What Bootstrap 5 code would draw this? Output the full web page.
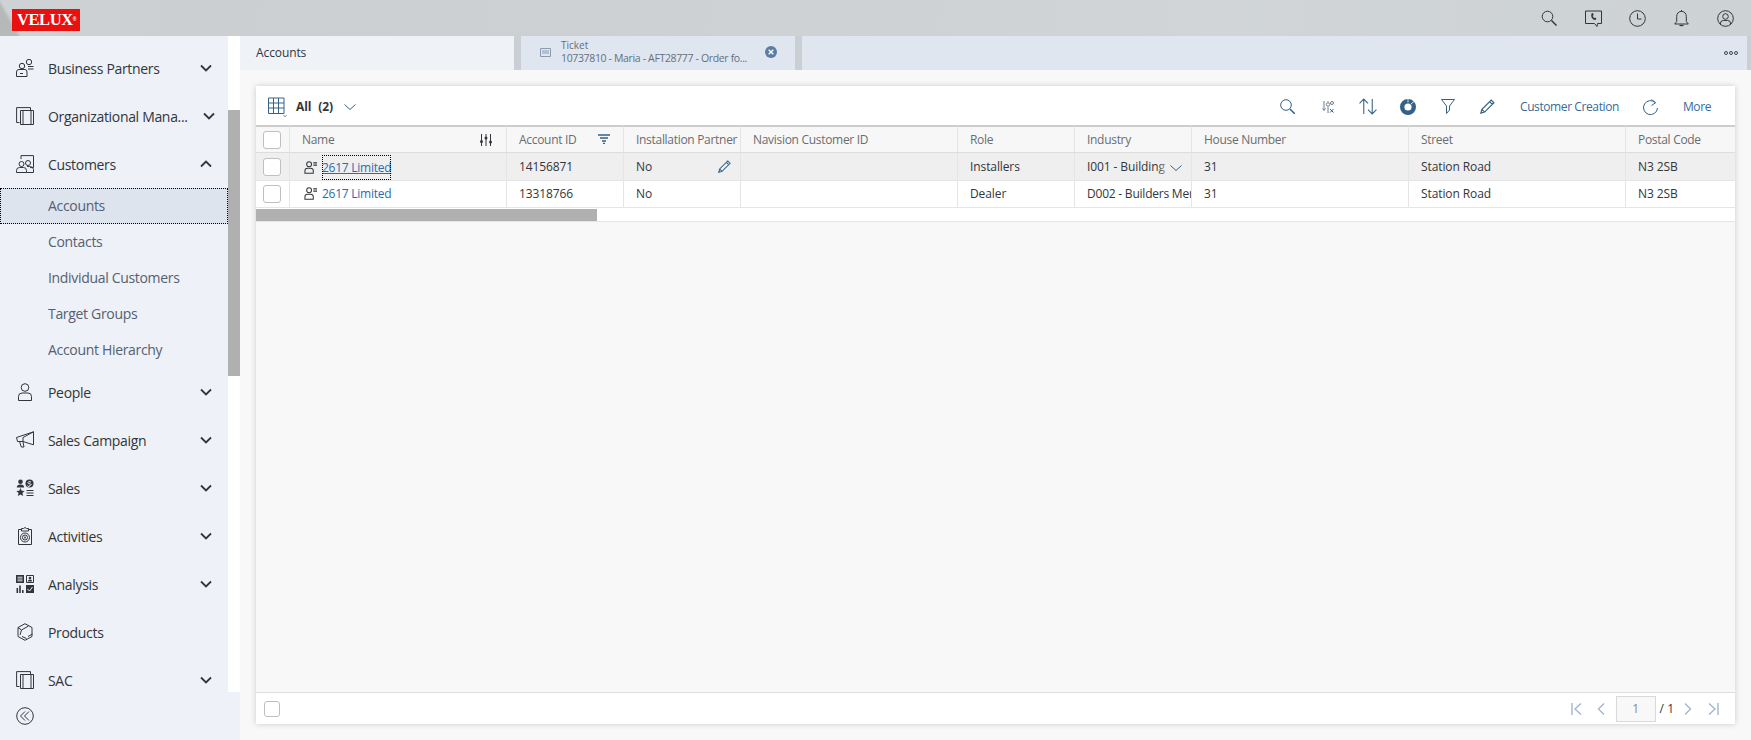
<!DOCTYPE html>
<html lang="en">
<head>
<meta charset="utf-8">
<title>Accounts</title>
<link href="https://cdn.jsdelivr.net/npm/bootstrap@5.3.0/dist/css/bootstrap.min.css" rel="stylesheet">
<style>
html,body{height:100%;overflow:hidden}
body{font-family:"Open Sans","Noto Sans",sans-serif;font-size:12px;color:#32363a;background:#f8f8f8}
.shell-top{height:36px;background:linear-gradient(60deg,#b5bab8 0,#b5bab8 15px,rgba(181,186,184,0) 19px),linear-gradient(100deg,#cfd3d6 0,#cbcfd2 10%,#cdd1d4 40%,#d1d5d7 70%,#cdd2d5 100%)}
.velux{width:68px;height:22px;margin:9px 0 0 12px;background:#e8110f;color:#fff;font:bold 16.5px/22px "Liberation Serif",serif;letter-spacing:-.4px;padding-left:5px;white-space:nowrap}
.velux sup{font-size:5px;top:-.8em;font-family:"Liberation Sans",sans-serif;letter-spacing:0}
.top-ico{width:44px;height:36px;color:#32363a}
.shell-body{height:704px}
.side{width:240px;background:#eef1f7;flex:none}
.side-scroll{height:656px}
.side-list{width:228px;padding-top:8px;height:656px;overflow:hidden;flex:none;font-size:14px;letter-spacing:-.32px}
.side-bar{width:12px;background:#fff;flex:none;height:656px}
.side-thumb{height:266px;margin-top:74px;background:#b0b0b0}
.nav-main{height:48px;padding-left:16px;color:#32363a}
.nav-main .nav-ico{width:18px;height:18px;margin-right:14px;flex:none;color:#32363a}
.nav-main span{flex:1;white-space:nowrap}
.nav-main .chev{width:12px;height:12px;margin-right:16px;flex:none}
.nav-main .chev.over{margin-right:13px}
.nav-sub{height:36px;padding-left:48px;padding-bottom:2px;color:#556070}
.nav-sub.on{background:#dde4ee;outline:1px dotted #000;outline-offset:-1px}
.side-foot{height:48px;padding-left:16px}
.main{min-width:0}
.tabs{height:34px;background:#c9cfd3;padding-right:4px;gap:7px}
.tab-a{width:274px;background:#eff3f8;padding-left:16px;flex:none;font-size:12px;letter-spacing:-.1px}
.tab-b{width:274px;background:#dfe6f0;flex:none;padding-left:19px;padding-bottom:2px;color:#6a7888}
.tab-ico{margin-right:10px;flex:none}
.tab-x{margin-right:18px;flex:none}
.tab-b small{display:block;font-size:10px;line-height:13px;color:#6a6d70}
.tab-b p{font-size:10.5px;line-height:13px;margin:0;white-space:nowrap;color:#64707e;letter-spacing:-.35px}
.tab-c{background:#dfe6f0;padding-right:9px}
.sheet{margin:16px;height:638px;background:#f8f8f8;box-shadow:0 0 6px rgba(0,0,0,.18)}
.tools{height:39px;background:#fff;color:#346187;padding:2px 12px 0 12px}
.tools b{color:#32363a;font-size:12px;font-weight:700;word-spacing:4px;letter-spacing:-.1px}
.thin-drop{margin-left:11px}
.tool-btn{width:40px;height:37px;flex:none}
.tool-txt{padding:0 12px;color:#3a6a99;font-size:12px;white-space:nowrap;letter-spacing:-.4px}
.grid-wrap{background:#fff;height:83px;overflow:hidden;flex:none}
table.grid{table-layout:fixed;border-collapse:separate;border-spacing:0;margin:0;width:1479px;color:#32363a}
table.grid th,table.grid td{font-weight:400;font-size:12px;padding:0 0 0 12px;border:0;border-right:1px solid #e5e5e5;border-bottom:1px solid #e5e5e5;white-space:nowrap;overflow:hidden;position:relative;vertical-align:middle;box-shadow:none;letter-spacing:-.1px}
table.grid th{height:28px;background:#f7f7f7;color:#6a6d70;border-top:2px solid #ccc;border-bottom-color:#ddd;letter-spacing:-.3px}
table.grid tr.hot td{height:28px;background:#efefef;padding-top:1px}
table.grid tr.cool td{height:27px;background:#fff}
table.grid .chk-cell{padding:0 0 0 7px}
table.grid td.tight-cell{letter-spacing:-.22px}
table.grid th:last-child,table.grid td:last-child{border-right:0}
.tick{display:block;width:18px;height:18px;border:1px solid #bfbfbf;border-radius:3px;background:#fff}
a.acct{color:#2b6cb0;text-decoration:none;letter-spacing:-.25px}
.focus-wrap{display:inline-block;padding:5px 0;line-height:15px;outline:1px dotted #000;outline-offset:-1px}
.person{width:13px;height:13px;margin:0 5px 0 2px;color:#32363a;vertical-align:-2px}
.head-ico{position:absolute;top:7px;color:#32363a}
.edit-ico{position:absolute;top:7px;right:9px;color:#346187}
.fade-tail{position:absolute;left:82px;top:0;width:16px;height:100%;background:linear-gradient(90deg,rgba(239,239,239,0),#efefef)}
.drop-ico{position:absolute;right:9px;top:9px;color:#346187}
.hscroll{height:14px;border-bottom:1px solid #e5e5e5;background:#fff;padding-top:1px}
.hthumb{width:341px;height:12px;background:#b0b0b0}
.sheet-foot{height:32px;background:#fff;border-top:1px solid #ddd;padding:0 16px 0 8px;color:#32363a}
.sheet-foot .tick{width:16px;height:16px}
.pager-ico{color:#a3b6cd;flex:none}
.pg-first{margin-right:14px}
.pg-of{margin-right:10px}
.pg-next{margin-right:15px}
.pager-num{width:40px;height:26px;border:1px solid #d9d9d9;background:#f8f8f8;color:#8a8a8a;text-align:center;line-height:24px;margin:0 4px 0 11px}
</style>
</head>
<body>
<svg width="0" height="0" class="position-absolute">
  <symbol id="down" viewBox="0 0 12 12"><path d="M1 3.500l5 5 5-5" fill="none" stroke="currentColor" stroke-width="1.800"/></symbol>
  <symbol id="up" viewBox="0 0 12 12"><path d="M1 8.500l5-5 5 5" fill="none" stroke="currentColor" stroke-width="1.800"/></symbol>
  <symbol id="thin" viewBox="0 0 12 12"><path d="M.5 3.500L6 8.500l5.500-5" fill="none" stroke="currentColor" stroke-width="1"/></symbol>
  <symbol id="pers" viewBox="0 0 14 14"><circle cx="5.500" cy="3.500" r="2.600" fill="none" stroke="currentColor" stroke-width="1.100"/><path d="M1 13.200V10.500q0-2.800 3-2.800h3q3 0 3 2.800v2.700z" fill="none" stroke="currentColor" stroke-width="1.100"/><path d="M10 2h4M10 4.500h4" stroke="currentColor" stroke-width="1.300"/></symbol>
  <symbol id="copies" viewBox="0 0 18 18"><path d="M3.500 15.500H.6V.6H14.500V3" fill="none" stroke="currentColor" stroke-width="1"/><path d="M4.500 3.500h13v14h-13z" fill="none" stroke="currentColor" stroke-width="1"/><path d="M7 3.500v14h8v-14" fill="none" stroke="currentColor" stroke-width="1"/></symbol>
  <symbol id="pen" viewBox="0 0 14 14"><path d="M.8 13.200l1-3.500L10.500 1l2.500 2.500-8.700 8.700zM9 2.500l2.500 2.500M1.800 9.700l2.500 2.500" fill="none" stroke="currentColor" stroke-width="1.100"/></symbol>
</svg>

<header class="shell-top d-flex justify-content-between">
  <div class="velux">VELUX<sup>®</sup></div>
  <div class="d-flex pe-1">
    <div class="top-ico d-flex align-items-center justify-content-center"><svg width="16" height="16" viewBox="0 0 16 16"><circle cx="6.500" cy="6.500" r="5.300" fill="none" stroke="currentColor"/><path d="M10.500 10.500l5 5" stroke="currentColor" stroke-width="1.500"/></svg></div>
    <div class="top-ico d-flex align-items-center justify-content-center"><svg width="17" height="17" viewBox="0 0 17 17"><path d="M.5 1h16v12.500h-4l-.5 3-2.500-3H.5z" fill="none" stroke="currentColor"/><path d="M6.500 3.500l1.500-.5.7 2-1 .8q.3 1.500 1.500 2.200l1-.6 1.300 1.600-1.200 1q-2.200 0-3.500-2.300-1-2-.3-4.200z" fill="currentColor"/></svg></div>
    <div class="top-ico d-flex align-items-center justify-content-center"><svg width="17" height="17" viewBox="0 0 17 17"><circle cx="8.500" cy="8.500" r="7.800" fill="none" stroke="currentColor"/><path d="M8.500 3.500v5.500h4" fill="none" stroke="currentColor"/></svg></div>
    <div class="top-ico d-flex align-items-center justify-content-center"><svg width="15" height="17" viewBox="0 0 15 17"><path d="M.7 14h13.600l-2-2.500V6.500q0-4.500-4.800-5.300Q2.700 2 2.700 6.500v5z" fill="none" stroke="currentColor"/><path d="M5.500 15.500h4" stroke="currentColor" stroke-width="1.300"/><path d="M7.500 0v1.500" stroke="currentColor"/></svg></div>
    <div class="top-ico d-flex align-items-center justify-content-center"><svg width="17" height="17" viewBox="0 0 17 17"><circle cx="8.500" cy="8.500" r="7.800" fill="none" stroke="currentColor"/><circle cx="8.500" cy="6.500" r="2.800" fill="none" stroke="currentColor"/><path d="M3.500 14.500v-1.500q0-2.500 3-2.500h4q3 0 3 2.500v1.500" fill="none" stroke="currentColor"/></svg></div>
  </div>
</header>

<div class="shell-body d-flex">
  <aside class="side d-flex flex-column">
    <div class="side-scroll d-flex">
      <nav class="side-list">
        <div class="nav-main d-flex align-items-center"><svg class="nav-ico" viewBox="0 0 18 18"><circle cx="13" cy="3" r="2.700" fill="none" stroke="currentColor"/><circle cx="6" cy="7" r="2.700" fill="none" stroke="currentColor"/><path d="M.5 17.500V13q0-2.500 2.500-2.500h6Q11 10.500 11 13v4.500zM12 7.500h5.500M12 10h5.500M4 14.500h3" fill="none" stroke="currentColor"/></svg><span>Business Partners</span><svg class="chev"><use href="#down"/></svg></div>
        <div class="nav-main d-flex align-items-center"><svg class="nav-ico" viewBox="0 0 18 18"><use href="#copies"/></svg><span>Organizational Mana...</span><svg class="chev over"><use href="#down"/></svg></div>
        <div class="nav-main d-flex align-items-center"><svg class="nav-ico" viewBox="0 0 18 18"><path d="M5 4V.6h12.500v12H14" fill="none" stroke="currentColor"/><circle cx="5.500" cy="9" r="2.500" fill="none" stroke="currentColor"/><circle cx="12" cy="8" r="2.500" fill="none" stroke="currentColor"/><path d="M.5 17.500v-2q0-3 3-3h4q3 0 3 3v2zM11 11.500h2.500q4 0 4 3v3h-7" fill="none" stroke="currentColor"/></svg><span>Customers</span><svg class="chev"><use href="#up"/></svg></div>
        <div class="nav-sub on d-flex align-items-center">Accounts</div>
        <div class="nav-sub d-flex align-items-center">Contacts</div>
        <div class="nav-sub d-flex align-items-center">Individual Customers</div>
        <div class="nav-sub d-flex align-items-center">Target Groups</div>
        <div class="nav-sub d-flex align-items-center">Account Hierarchy</div>
        <div class="nav-main d-flex align-items-center"><svg class="nav-ico" viewBox="0 0 18 18"><circle cx="9" cy="4.500" r="3.800" fill="none" stroke="currentColor"/><path d="M2.500 17.500v-4q0-3.500 3.500-3.500h6q3.500 0 3.500 3.500v4z" fill="none" stroke="currentColor"/></svg><span>People</span><svg class="chev"><use href="#down"/></svg></div>
        <div class="nav-main d-flex align-items-center"><svg class="nav-ico" viewBox="0 0 18 18"><path d="M17.500 .8v13L7 10.500H1.500L.5 6.500zM17.500 .8L7 6.500M7 6.500v4M3.500 10.500l1.800 5.500h2.700l-1-5" fill="none" stroke="currentColor" stroke-linejoin="round"/></svg><span>Sales Campaign</span><svg class="chev"><use href="#down"/></svg></div>
        <div class="nav-main d-flex align-items-center"><svg class="nav-ico" viewBox="0 0 18 18"><circle cx="4.500" cy="2.800" r="2.300" fill="currentColor"/><path d="M.8 8.500q0-3 3.700-3t3.700 3z" fill="currentColor"/><circle cx="13.500" cy="4.500" r="4" fill="currentColor"/><path d="M4.500 9l1.200 2.800 3 .2-2.300 2 .8 3-2.700-1.600L1.800 17l.8-3L.3 12l3-.2z" fill="currentColor"/><path d="M10.500 11.500h7M10.500 14h7M10.500 16.500h7" stroke="currentColor"/><path d="M15 3q-3-1-3 .5t2.200 1.500-.2 1.800-2.500-.3" stroke="#eef1f7" fill="none"/></svg><span>Sales</span><svg class="chev"><use href="#down"/></svg></div>
        <div class="nav-main d-flex align-items-center"><svg class="nav-ico" viewBox="0 0 18 18"><path d="M5 2.500H2.500v15h13v-15H13" fill="none" stroke="currentColor"/><path d="M5.500 1.500h2l1.500-1 1.500 1h2v2.500h-7z" fill="none" stroke="currentColor"/><circle cx="9" cy="10.500" r="4.500" fill="none" stroke="currentColor"/><circle cx="9" cy="10.500" r="2.500" fill="none" stroke="currentColor"/><circle cx="9" cy="10.500" r=".9" fill="currentColor"/></svg><span>Activities</span><svg class="chev"><use href="#down"/></svg></div>
        <div class="nav-main d-flex align-items-center"><svg class="nav-ico" viewBox="0 0 18 18"><path d="M0 0h8v8H0z" fill="currentColor"/><path d="M1.500 2.200h5M1.500 4h5M1.500 5.800h5" stroke="#eef1f7" stroke-width=".9"/><path d="M10.500 .5h7v7h-7z" fill="none" stroke="currentColor"/><circle cx="14" cy="3" r="1.300" fill="currentColor"/><path d="M11.800 6.500q0-2 2.200-2t2.200 2z" fill="currentColor"/><path d="M.5 13h1.600v5H.5zM3.200 10.500h1.600V18H3.200zM6 15h1.600v3H6z" fill="currentColor"/><path d="M10 10h8v8h-8z" fill="currentColor"/><path d="M11.500 14l2 2 3-4" stroke="#eef1f7" fill="none"/></svg><span>Analysis</span><svg class="chev"><use href="#down"/></svg></div>
        <div class="nav-main d-flex align-items-center"><svg class="nav-ico" viewBox="0 0 18 18"><path d="M9 .7l7 3.800v9l-7 3.800-7-3.800v-9z" fill="none" stroke="currentColor"/><path d="M2 4.500L5.500 7 4 12M5.500 7L12.500 3M6 13.500l4.500 2M12 13.500L16.500 11" fill="none" stroke="currentColor"/></svg><span>Products</span></div>
        <div class="nav-main d-flex align-items-center"><svg class="nav-ico" viewBox="0 0 18 18"><use href="#copies"/></svg><span>SAC</span><svg class="chev"><use href="#down"/></svg></div>
      </nav>
      <div class="side-bar"><div class="side-thumb"></div></div>
    </div>
    <div class="side-foot d-flex align-items-center"><svg width="18" height="18" viewBox="0 0 18 18"><circle cx="9" cy="9" r="8.300" fill="none" stroke="#32363a"/><path d="M9 4.500L4.500 9 9 13.500M13 4.500L8.500 9l4.500 4.500" fill="none" stroke="#32363a"/></svg></div>
  </aside>

  <main class="main flex-grow-1 d-flex flex-column">
    <div class="tabs d-flex">
      <div class="tab-a d-flex align-items-center">Accounts</div>
      <div class="tab-b d-flex align-items-center">
        <svg width="11" height="9" viewBox="0 0 11 9" class="tab-ico"><path d="M.5 .5h10v8H.5zM2 3h7M2 5h7" fill="none" stroke="#8a9bb0"/></svg>
        <div class="flex-grow-1"><small>Ticket</small><p>10737810 - Maria - AFT28777 - Order fo...</p></div>
        <svg width="12" height="12" viewBox="0 0 12 12" class="tab-x"><circle cx="6" cy="6" r="6" fill="#5b7ca6"/><path d="M3.700 3.700l4.600 4.600M8.300 3.700L3.700 8.300" stroke="#fff" stroke-width="1.400"/></svg>
      </div>
      <div class="tab-c flex-grow-1 d-flex align-items-center justify-content-end"><svg width="14" height="4" viewBox="0 0 14 4"><g fill="none" stroke="#32363a" stroke-width=".9"><circle cx="2" cy="2" r="1.500"/><circle cx="7" cy="2" r="1.500"/><circle cx="12" cy="2" r="1.500"/></g></svg></div>
    </div>

    <section class="sheet d-flex flex-column">
      <div class="tools d-flex align-items-center">
        <svg width="20" height="20" viewBox="0 0 20 20" class="me-1"><path d="M.5 1h15.500v15.500H.5zM.5 6h15.500M.5 11h15.500M5.500 1v15.500M10.500 1v15.500" fill="none" stroke="#346187"/><path d="M15.500 18.500l1.500 1 1.500-1" fill="none" stroke="#346187" stroke-width=".8"/></svg>
        <b class="ms-1">All (2)</b>
        <svg width="12" height="12" class="me-auto thin-drop"><use href="#thin"/></svg>
        <div class="tool-btn d-flex align-items-center justify-content-center"><svg width="15" height="15" viewBox="0 0 15 15"><circle cx="6" cy="6" r="5.300" fill="none" stroke="currentColor"/><path d="M10 10l5 5" stroke="currentColor" stroke-width="1.500"/></svg></div>
        <div class="tool-btn d-flex align-items-center justify-content-center"><svg width="12" height="12" viewBox="0 0 12 12"><path d="M2 0v9M.5 7.500L2 9.500l1.500-2M6 0v1M6 6v6" stroke="#6b7e93" fill="none"/><circle cx="6" cy="3.500" r="1.700" fill="none" stroke="#6b7e93"/><path d="M8 8l3.500 3.500M11.500 8L8 11.500" stroke="currentColor"/><circle cx="10" cy="2" r="1.500" fill="none" stroke="#6b7e93"/></svg></div>
        <div class="tool-btn d-flex align-items-center justify-content-center"><svg width="18" height="17" viewBox="0 0 17 16"><path d="M4.500 15V1M.5 5l4-4 4 4M12.500 1v14M8.500 11l4 4 4-4" fill="none" stroke="currentColor"/></svg></div>
        <div class="tool-btn d-flex align-items-center justify-content-center"><svg width="16" height="16" viewBox="0 0 16 16"><circle cx="8" cy="8" r="5.800" fill="none" stroke="#346187" stroke-width="4.400"/><path d="M8 0v3.500M14 2.500l-3 2.500" stroke="#fff" stroke-width=".8"/></svg></div>
        <div class="tool-btn d-flex align-items-center justify-content-center"><svg width="14" height="15" viewBox="0 0 14 15"><path d="M.5 .5h13L8.500 7v4L5.500 14.500V7z" fill="none" stroke="currentColor" stroke-linejoin="round"/></svg></div>
        <div class="tool-btn d-flex align-items-center justify-content-center"><svg width="15" height="15"><use href="#pen"/></svg></div>
        <div class="tool-txt">Customer Creation</div>
        <div class="tool-btn d-flex align-items-center justify-content-center"><svg width="15" height="16" viewBox="0 0 15 16"><path d="M12.500 3.700A7 7 0 1 0 14.500 9" fill="none" stroke="currentColor"/><path d="M8.500 .5l4 3.200-4 2.800" fill="none" stroke="currentColor"/></svg></div>
        <div class="tool-txt">More</div>
      </div>

      <div class="grid-wrap">
        <table class="table grid">
          <colgroup><col style="width:34px"><col style="width:217px"><col style="width:117px"><col style="width:117px"><col style="width:217px"><col style="width:117px"><col style="width:117px"><col style="width:217px"><col style="width:217px"><col style="width:109px"></colgroup>
          <thead><tr>
            <th class="chk-cell"><span class="tick"></span></th>
            <th>Name<svg class="head-ico" style="right:14px" width="12" height="12" viewBox="0 0 12 12"><path d="M1.500 0v12M6 0v12M10.500 0v12" stroke="currentColor"/><circle cx="1.500" cy="7.500" r="1.500" fill="currentColor"/><circle cx="6" cy="4" r="1.500" fill="currentColor"/><circle cx="10.500" cy="8" r="1.500" fill="currentColor"/></svg></th>
            <th>Account ID<svg class="head-ico" style="right:13px;color:#346187" width="12" height="10" viewBox="0 0 12 10"><path d="M0 1h12M2 4h8M4 7h4M5 9.500h2" stroke="currentColor" stroke-width="1.400"/></svg></th>
            <th>Installation Partner</th>
            <th>Navision Customer ID</th>
            <th>Role</th>
            <th>Industry</th>
            <th>House Number</th>
            <th>Street</th>
            <th>Postal Code</th>
          </tr></thead>
          <tbody>
            <tr class="hot">
              <td class="chk-cell"><span class="tick"></span></td>
              <td><svg class="person"><use href="#pers"/></svg><span class="focus-wrap"><a href="#" class="acct text-decoration-underline">2617 Limited</a></span></td>
              <td>14156871</td>
              <td>No<svg class="edit-ico" width="13" height="13"><use href="#pen"/></svg></td>
              <td></td>
              <td>Installers</td>
              <td>I001 - Building<span class="fade-tail"></span><svg class="drop-ico" width="12" height="12"><use href="#thin"/></svg></td>
              <td>31</td>
              <td>Station Road</td>
              <td>N3 2SB</td>
            </tr>
            <tr class="cool">
              <td class="chk-cell"><span class="tick"></span></td>
              <td><svg class="person"><use href="#pers"/></svg><a href="#" class="acct">2617 Limited</a></td>
              <td>13318766</td>
              <td>No</td>
              <td></td>
              <td>Dealer</td>
              <td class="tight-cell">D002 - Builders Mer</td>
              <td>31</td>
              <td>Station Road</td>
              <td>N3 2SB</td>
            </tr>
          </tbody>
        </table>
      </div>
      <div class="hscroll"><div class="hthumb"></div></div>
      <div class="flex-grow-1"></div>
      <div class="sheet-foot d-flex align-items-center">
        <span class="tick me-auto"></span>
        <svg class="pager-ico pg-first" width="12" height="12" viewBox="0 0 12 12"><path d="M1 0v12M10 .5L4 6l6 5.500" fill="none" stroke="currentColor" stroke-width="1.400"/></svg>
        <svg class="pager-ico" width="8" height="12" viewBox="0 0 8 12"><path d="M7 .5L1.500 6 7 11.500" fill="none" stroke="currentColor" stroke-width="1.400"/></svg>
        <div class="pager-num">1</div>
        <span class="pg-of">/ 1</span>
        <svg class="pager-ico pg-next" width="8" height="12" viewBox="0 0 8 12"><path d="M1 .5L6.500 6 1 11.500" fill="none" stroke="currentColor" stroke-width="1.400"/></svg>
        <svg class="pager-ico" width="12" height="12" viewBox="0 0 12 12"><path d="M11 0v12M2 .5L8 6l-6 5.500" fill="none" stroke="currentColor" stroke-width="1.400"/></svg>
      </div>
    </section>
  </main>
</div>
<script src="https://cdn.jsdelivr.net/npm/bootstrap@5.3.0/dist/js/bootstrap.bundle.min.js"></script>
</body>
</html>
